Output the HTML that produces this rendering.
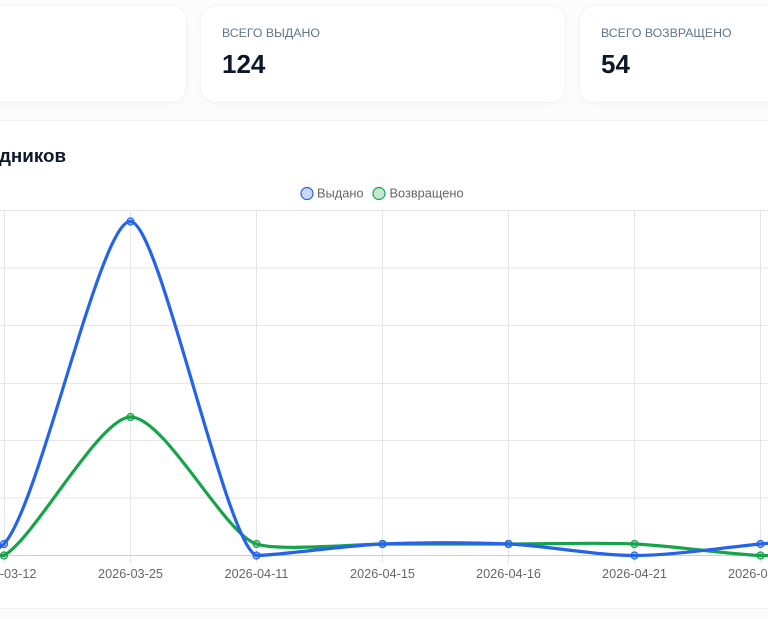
<!DOCTYPE html>
<html lang="ru">
<head>
<meta charset="utf-8">
<title>Статистика</title>
<style>
html,body{margin:0;padding:0;width:768px;height:619px;overflow:hidden;background:#fcfcfd;}
body{position:relative;font-family:"Liberation Sans",Arial,sans-serif;}
.card{position:absolute;top:5px;height:96px;background:#fff;border:1px solid #f1f3f5;border-radius:16px;box-shadow:0 2px 8px rgba(15,23,42,.025);box-sizing:content-box;}
.lbl{position:absolute;top:26px;font-size:12.3px;line-height:15px;color:#64748b;white-space:nowrap;}
.val{position:absolute;top:49px;font-size:26px;line-height:30px;font-weight:700;color:#0f172a;white-space:nowrap;}
.panel{position:absolute;left:-20px;top:120px;width:820px;height:487px;background:#fff;border:1px solid #f0f1f3;}
.title{position:absolute;right:702px;top:146px;font-size:18.8px;line-height:20px;font-weight:700;color:#0f172a;white-space:nowrap;}
svg{position:absolute;left:0;top:0;}
</style>
</head>
<body>
<div class="panel"></div>
<div class="card" style="left:-170px;width:355px"></div>
<div class="card" style="left:200px;width:364px"></div>
<div class="card" style="left:579px;width:364px"></div>
<div class="lbl" style="left:222px">ВСЕГО ВЫДАНО</div>
<div class="val" style="left:222px">124</div>
<div class="lbl" style="left:601px">ВСЕГО ВОЗВРАЩЕНО</div>
<div class="val" style="left:601px">54</div>
<div class="title">Активность сотрудников</div>
<svg width="768" height="619" viewBox="0 0 768 619" xmlns="http://www.w3.org/2000/svg">
  <g stroke="#e6e6e6" stroke-width="1" fill="none">
    <path d="M0 210.5H768M0 268H768M0 325.5H768M0 383.5H768M0 440.5H768M0 498H768"/>
    <path d="M4.5 210V563M130.5 210V563M256.5 210V563M382.5 210V563M508.5 210V563M634.5 210V563M760.5 210V563"/>
  </g>
  <path d="M0 555.5H768" stroke="#cfcfcf" stroke-width="1" fill="none"/>

  <path d="M-6 555.5L4 555.5C35 538 99 417.5 130.5 417C165 417 225 535 256.5 544C278 551 345 545 382.5 544C420.3 544 470.7 544 508.5 544C546.3 544 596.7 542.3 634.5 544C672.3 545.7 722.7 553.8 760.5 555.5C798 555.5 830 555.5 886 555.5" fill="none" stroke="#16a34a" stroke-width="3.2"/>
  <g fill="#16a34a" fill-opacity=".3" stroke="#16a34a" stroke-width="1.2">
    <circle cx="4" cy="555.5" r="3.5"/><circle cx="130.5" cy="417" r="3.5"/><circle cx="256.5" cy="544" r="3.5"/><circle cx="382.5" cy="544" r="3.5"/><circle cx="508.5" cy="544" r="3.5"/><circle cx="634.5" cy="544" r="3.5"/><circle cx="760.5" cy="555.5" r="3.5"/>
  </g>

  <path d="M-6 552L4 544C40 505 100 220 130.5 221.5C160 223 225.7 545 256.5 555.5C276.3 555.5 344.6 545.7 382.5 544C420.2 542.3 470.8 542.3 508.5 544C546.4 545.7 596.7 555.5 634.5 555.5C672.3 555.5 722.7 547.5 760.5 544C798.3 540.5 830 535 886 532" fill="none" stroke="#2563eb" stroke-width="3.2"/>
  <g fill="#2563eb" fill-opacity=".3" stroke="#2563eb" stroke-width="1.2">
    <circle cx="4" cy="544" r="3.5"/><circle cx="130.5" cy="221.5" r="3.5"/><circle cx="256.5" cy="555.5" r="3.5"/><circle cx="382.5" cy="544" r="3.5"/><circle cx="508.5" cy="544" r="3.5"/><circle cx="634.5" cy="555.5" r="3.5"/><circle cx="760.5" cy="544" r="3.5"/>
  </g>

  <circle cx="307" cy="193.5" r="6" fill="#c9d8fa" stroke="#2563eb" stroke-width="1.2"/>
  <text x="317" y="197.5" font-family="Liberation Sans, Arial, sans-serif" font-size="12.8" fill="#666">Выдано</text>
  <circle cx="379" cy="193.5" r="6" fill="#c5e8d2" stroke="#16a34a" stroke-width="1.2"/>
  <text x="389.5" y="197.5" font-family="Liberation Sans, Arial, sans-serif" font-size="12.8" fill="#666">Возвращено</text>

  <g font-family="Liberation Sans, Arial, sans-serif" font-size="12.7" fill="#666" text-anchor="middle">
    <text x="4" y="578">2026-03-12</text>
    <text x="130.5" y="578">2026-03-25</text>
    <text x="256.5" y="578">2026-04-11</text>
    <text x="382.5" y="578">2026-04-15</text>
    <text x="508.5" y="578">2026-04-16</text>
    <text x="634.5" y="578">2026-04-21</text>
    <text x="760.5" y="578">2026-04-22</text>
  </g>
</svg>
</body>
</html>
